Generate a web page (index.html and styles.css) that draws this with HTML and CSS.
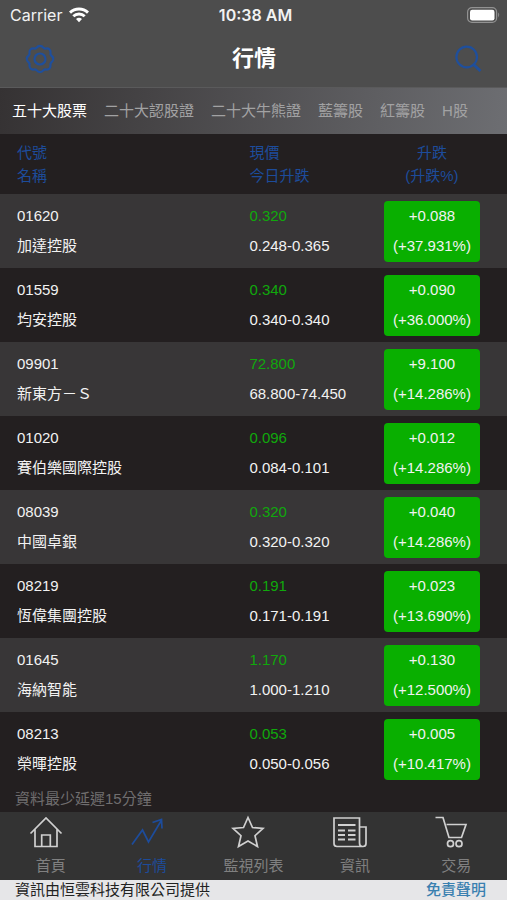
FILE: index.html
```html
<!DOCTYPE html>
<html lang="zh-Hant">
<head>
<meta charset="utf-8">
<meta name="viewport" content="width=device-width, initial-scale=1">
<title>行情</title>
<link rel="stylesheet" href="styles.css">
</head>
<body>
<div class="app">
  <div class="status">
    <div class="status-left">
      <span>Carrier</span>
      <svg width="20" height="16" viewBox="0 0 20 16" fill="none" stroke="#fff" stroke-width="2.9" aria-hidden="true">
        <path d="M1 5.6a13 13 0 0 1 18 0"/>
        <path d="M4.3 9.3a8.2 8.2 0 0 1 11.4 0"/>
        <path d="M10 15.2l-3-3.1a4.3 4.3 0 0 1 6 0z" fill="#fff" stroke="none"/>
      </svg>
    </div>
    <span class="clock">10:38 AM</span>
    <div class="status-right">
      <svg width="34" height="16" viewBox="0 0 34 16" aria-hidden="true">
        <rect x=".6" y=".6" width="29" height="14.8" rx="4.4" fill="none" stroke="#929292" stroke-width="1.2"/>
        <rect x="3" y="2.8" width="24.5" height="10.6" rx="2.2" fill="#fff"/>
        <path d="M31.2 5.6q2 2.2 0 4.8z" fill="#929292"/>
      </svg>
    </div>
  </div>

  <header class="nav">
    <button class="icon-btn" type="button" aria-label="設定">
      <svg width="30" height="30" viewBox="0 0 30 30" fill="none" stroke="#1f4f9c" stroke-width="2.2" stroke-linejoin="round" aria-hidden="true">
        <path d="M11.500 3.800Q13 1.800 15 1.800Q17 1.800 18.500 3.800Q19.500 4.900 21 4.500Q23.200 4.200 24.500 5.500Q25.800 6.800 25.500 9Q25.100 10.500 26.200 11.500Q28.200 13 28.200 15Q28.200 17 26.200 18.500Q25.100 19.500 25.500 21Q25.800 23.200 24.500 24.500Q23.200 25.800 21 25.500Q19.500 25.100 18.500 26.200Q17 28.200 15 28.200Q13 28.200 11.500 26.200Q10.500 25.100 9 25.500Q6.800 25.800 5.500 24.500Q4.200 23.200 4.500 21Q4.900 19.500 3.800 18.500Q1.800 17 1.800 15Q1.800 13 3.800 11.500Q4.900 10.500 4.500 9Q4.200 6.800 5.500 5.500Q6.800 4.200 9 4.500Q10.500 4.900 11.500 3.800Z"/>
        <circle cx="15" cy="15" r="5.500"/>
      </svg>
    </button>
    <h1>行情</h1>
    <button class="icon-btn" type="button" aria-label="搜尋">
      <svg width="28" height="28" viewBox="0 0 28 28" fill="none" stroke="#1f4f9c" stroke-width="2.2" aria-hidden="true">
        <circle cx="12.700" cy="12" r="10.300"/>
        <path d="M19 19l7.500 7" stroke-width="2.800"/>
      </svg>
    </button>
  </header>

  <nav class="tabs">
    <a class="active" href="#stocks">五十大股票</a>
    <a href="#warrants">二十大認股證</a>
    <a href="#cbbc">二十大牛熊證</a>
    <a href="#blue">藍籌股</a>
    <a href="#red">紅籌股</a>
    <a href="#h">H股</a>
  </nav>

  <main>
    <table class="quotes">
      <thead>
        <tr><th scope="col">代號<br>名稱</th><th scope="col">現價<br>今日升跌</th><th scope="col">升跌<br>(升跌%)</th></tr>
      </thead>
      <tbody>
        <tr><td>01620<br>加達控股</td><td><span class="price">0.320</span><br>0.248-0.365</td><td><div class="badge">+0.088<br>(+37.931%)</div></td></tr>
        <tr><td>01559<br>均安控股</td><td><span class="price">0.340</span><br>0.340-0.340</td><td><div class="badge">+0.090<br>(+36.000%)</div></td></tr>
        <tr><td>09901<br>新東方－Ｓ</td><td><span class="price">72.800</span><br>68.800-74.450</td><td><div class="badge">+9.100<br>(+14.286%)</div></td></tr>
        <tr><td>01020<br>賽伯樂國際控股</td><td><span class="price">0.096</span><br>0.084-0.101</td><td><div class="badge">+0.012<br>(+14.286%)</div></td></tr>
        <tr><td>08039<br>中國卓銀</td><td><span class="price">0.320</span><br>0.320-0.320</td><td><div class="badge">+0.040<br>(+14.286%)</div></td></tr>
        <tr><td>08219<br>恆偉集團控股</td><td><span class="price">0.191</span><br>0.171-0.191</td><td><div class="badge">+0.023<br>(+13.690%)</div></td></tr>
        <tr><td>01645<br>海納智能</td><td><span class="price">1.170</span><br>1.000-1.210</td><td><div class="badge">+0.130<br>(+12.500%)</div></td></tr>
        <tr><td>08213<br>榮暉控股</td><td><span class="price">0.053</span><br>0.050-0.056</td><td><div class="badge">+0.005<br>(+10.417%)</div></td></tr>
      </tbody>
    </table>
    <p class="delay">資料最少延遲15分鐘</p>
  </main>

  <nav class="tabbar">
    <a href="#home">
      <svg width="34" height="34" viewBox="0 0 34 34" aria-hidden="true">
        <path d="M1.500 18.500L17 3L32.500 18.500M6 14.500V31.500H28V14.500M12.700 31.500V20H21.300V31.500"/>
      </svg>
      <span>首頁</span>
    </a>
    <a class="active" href="#quotes">
      <svg width="34" height="34" viewBox="0 0 34 34" aria-hidden="true">
        <path d="M2 29.500L12.500 15L18.500 27L31 6M22.500 7.500L31.500 4.500L32 13.500"/>
      </svg>
      <span>行情</span>
    </a>
    <a href="#watchlist">
      <svg width="34" height="34" viewBox="0 0 34 34" aria-hidden="true">
        <path d="M17 2.500L21.500 12.500L32 13.500L24 20.700L26.500 31.500L17 26L7.500 31.500L10 20.700L2 13.500L12.500 12.500Z"/>
      </svg>
      <span>監視列表</span>
    </a>
    <a href="#news">
      <svg width="34" height="34" viewBox="0 0 34 34" aria-hidden="true">
        <path d="M26.500 28V3H1V28.500Q1 31.500 4 31.500H30Q33 31.500 33 28.500V12H26.500V28Q26.500 31.500 29.500 31.500"/>
        <path d="M5 10H22.500M5 15.500H12M15 15.500H22.500M5 20H12M15 20H22.500M5 24.500H12M15 24.500H22.500" stroke-width="2"/>
      </svg>
      <span>資訊</span>
    </a>
    <a href="#trade">
      <svg width="34" height="34" viewBox="0 0 34 34" aria-hidden="true">
        <path d="M1.500 2.500H9L15 22.500H27.500L32 9.500H12.500"/>
        <circle cx="16.500" cy="28.700" r="3"/><circle cx="25" cy="28.700" r="3"/>
      </svg>
      <span>交易</span>
    </a>
  </nav>

  <footer class="credit">
    <span>資訊由恒雲科技有限公司提供</span>
    <a href="#disclaimer">免責聲明</a>
  </footer>
</div>
</body>
</html>
```
FILE: styles.css
```css
* { box-sizing: border-box; }

body {
  margin: 0;
  background: #231f20;
  color: #f2f2f2;
  font: 15px/30px "Liberation Sans", "Noto Sans CJK TC", sans-serif;
}

a { color: inherit; text-decoration: none; }
svg { display: block; }

.app {
  min-height: 100vh;
  display: flex;
  flex-direction: column;
}

.status {
  display: grid;
  grid-template-columns: 1fr auto 1fr;
  align-items: center;
  height: 30px;
  padding: 0 6px 0 10px;
  background: #4d4d4d;
  font-family: Inter, sans-serif;
  font-size: 16px;
}
.status-left { display: flex; align-items: center; gap: 7px; }
.status-right { display: flex; justify-content: flex-end; }
.clock { font-weight: 600; }

.nav {
  display: flex;
  align-items: center;
  justify-content: space-between;
  height: 58px;
  padding: 0 24px 0 25px;
  background: #4d4d4d;
  border-bottom: 1px solid #5a5a5b;
}
.nav h1 {
  margin: 0;
  color: #fff;
  font-size: 22px;
  font-weight: 700;
}
.icon-btn {
  width: 30px;
  padding: 0;
  border: 0;
  background: none;
  display: flex;
  justify-content: center;
}

.tabs {
  display: flex;
  align-items: center;
  gap: 17px;
  height: 46px;
  padding: 0 12px;
  background: linear-gradient(100deg, #353233, #6d6e72);
  color: #a2a2a3;
  white-space: nowrap;
}
.tabs .active { color: #fff; }

main { flex: 1; }

.quotes {
  width: 100%;
  table-layout: fixed;
  border-collapse: collapse;
}
.quotes th, .quotes td { padding: 0; text-align: left; }
.quotes th {
  height: 60px;
  color: #1d4c9b;
  font-weight: 400;
  line-height: 23px;
}
.quotes th:nth-child(1) { width: 49%; }
.quotes th:nth-child(3) { width: 30%; }
.quotes th:first-child, .quotes td:first-child { padding-left: 17px; }
.quotes th:nth-child(2), .quotes td:nth-child(2) { padding-left: 1px; }
.quotes th:last-child, .quotes td:last-child { padding-left: 2px; text-align: center; }
.quotes td { height: 74px; }
.quotes tbody tr:nth-child(odd) { background: #383637; }
.price { color: #10a80c; }
.badge {
  width: 96px;
  margin: 0 auto;
  padding-bottom: 1px;
  border-radius: 4px;
  background: #09af00;
}

.delay {
  margin: 0;
  padding: 0 15px;
  height: 26px;
  color: #706e6f;
  line-height: 26px;
}

.tabbar {
  display: grid;
  grid-template-columns: repeat(5, 1fr);
  height: 68px;
  padding-top: 3px;
  background: #333;
  color: #808080;
}
.tabbar a {
  display: flex;
  flex-direction: column;
  align-items: center;
  line-height: 34px;
}
.tabbar svg {
  margin-right: 10px;
  fill: none;
  stroke: #d0d0d0;
  stroke-width: 1.7;
}
.tabbar .active { color: #1d4c9b; }
.tabbar .active svg { stroke: #1d4c9b; }

.credit {
  display: flex;
  justify-content: space-between;
  height: 20px;
  padding: 0 21px 0 15px;
  background: #e6e6e8;
  color: #222;
  line-height: 20px;
}
.credit a { color: #3a80b0; font-weight: 500; }
```
